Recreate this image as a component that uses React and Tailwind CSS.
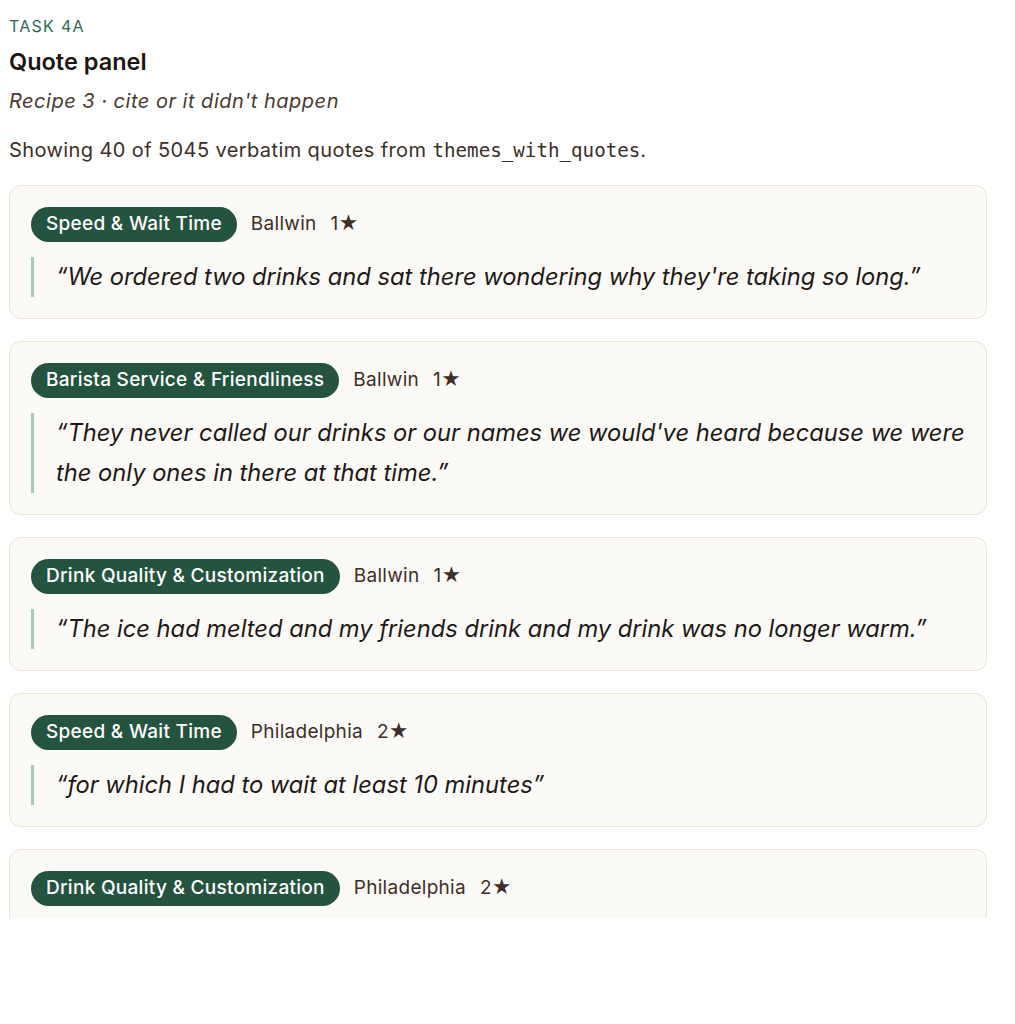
const quotes = [
  {
    theme: "Speed & Wait Time",
    city: "Ballwin",
    stars: 1,
    text: "We ordered two drinks and sat there wondering why they're taking so long.",
  },
  {
    theme: "Barista Service & Friendliness",
    city: "Ballwin",
    stars: 1,
    text: "They never called our drinks or our names we would've heard because we were the only ones in there at that time.",
  },
  {
    theme: "Drink Quality & Customization",
    city: "Ballwin",
    stars: 1,
    text: "The ice had melted and my friends drink and my drink was no longer warm.",
  },
  {
    theme: "Speed & Wait Time",
    city: "Philadelphia",
    stars: 2,
    text: "for which I had to wait at least 10 minutes",
  },
  {
    theme: "Drink Quality & Customization",
    city: "Philadelphia",
    stars: 2,
    text: "The drink was watered down and did not taste like the usual order at all.",
  },
];

const QuoteCard = ({ q }) => (
  <div className="rounded-xl border border-[#ece4d3] bg-[#fcfaf6] px-[21px] py-[21px]">
    <div className="flex items-center gap-[14px] text-[19px] tracking-[0.015em]">
      <span className="rounded-full bg-[#245440] px-[15px] h-[35px] flex items-center font-medium text-white">
        {q.theme}
      </span>
      <span className="text-[#3d2f28]">{q.city}</span>
      <span className="text-[#3d2f28]">{q.stars}★</span>
    </div>
    <blockquote className="mt-[15px] border-l-[3px] border-[#a8c8b9] pl-[22px] text-[23.7px] italic leading-[40px] text-[#1e1916]">
      “{q.text}”
    </blockquote>
  </div>
);

export default function App() {
  return (
    <div className="h-[918px] overflow-hidden bg-white font-['Inter',sans-serif]">
      <div className="pl-[9px] pr-[28px] pt-[15px]">
        <div className="text-[16px] uppercase tracking-[0.08em] text-[#2d6a4f] leading-[22px]">
          Task 4A
        </div>
        <h1 className="mt-[11px] text-[23.5px] font-semibold text-[#1c1512] leading-[28px]">
          Quote panel
        </h1>
        <p className="mt-[13px] text-[20px] tracking-[0.025em] italic text-[#4a3a30] leading-[24px]">
          Recipe 3 · cite or it didn't happen
        </p>
        <p className="mt-[25px] text-[20px] tracking-[0.02em] text-[#3d2f28] leading-[24px]">
          Showing 40 of 5045 verbatim quotes from{" "}
          <code className="font-['DejaVu_Sans_Mono',monospace] text-[19.2px] tracking-normal">themes_with_quotes</code>.
        </p>
        <div className="mt-[22px] flex flex-col gap-[22px]">
          {quotes.map((q, i) => (
            <QuoteCard key={i} q={q} />
          ))}
        </div>
      </div>
    </div>
  );
}
